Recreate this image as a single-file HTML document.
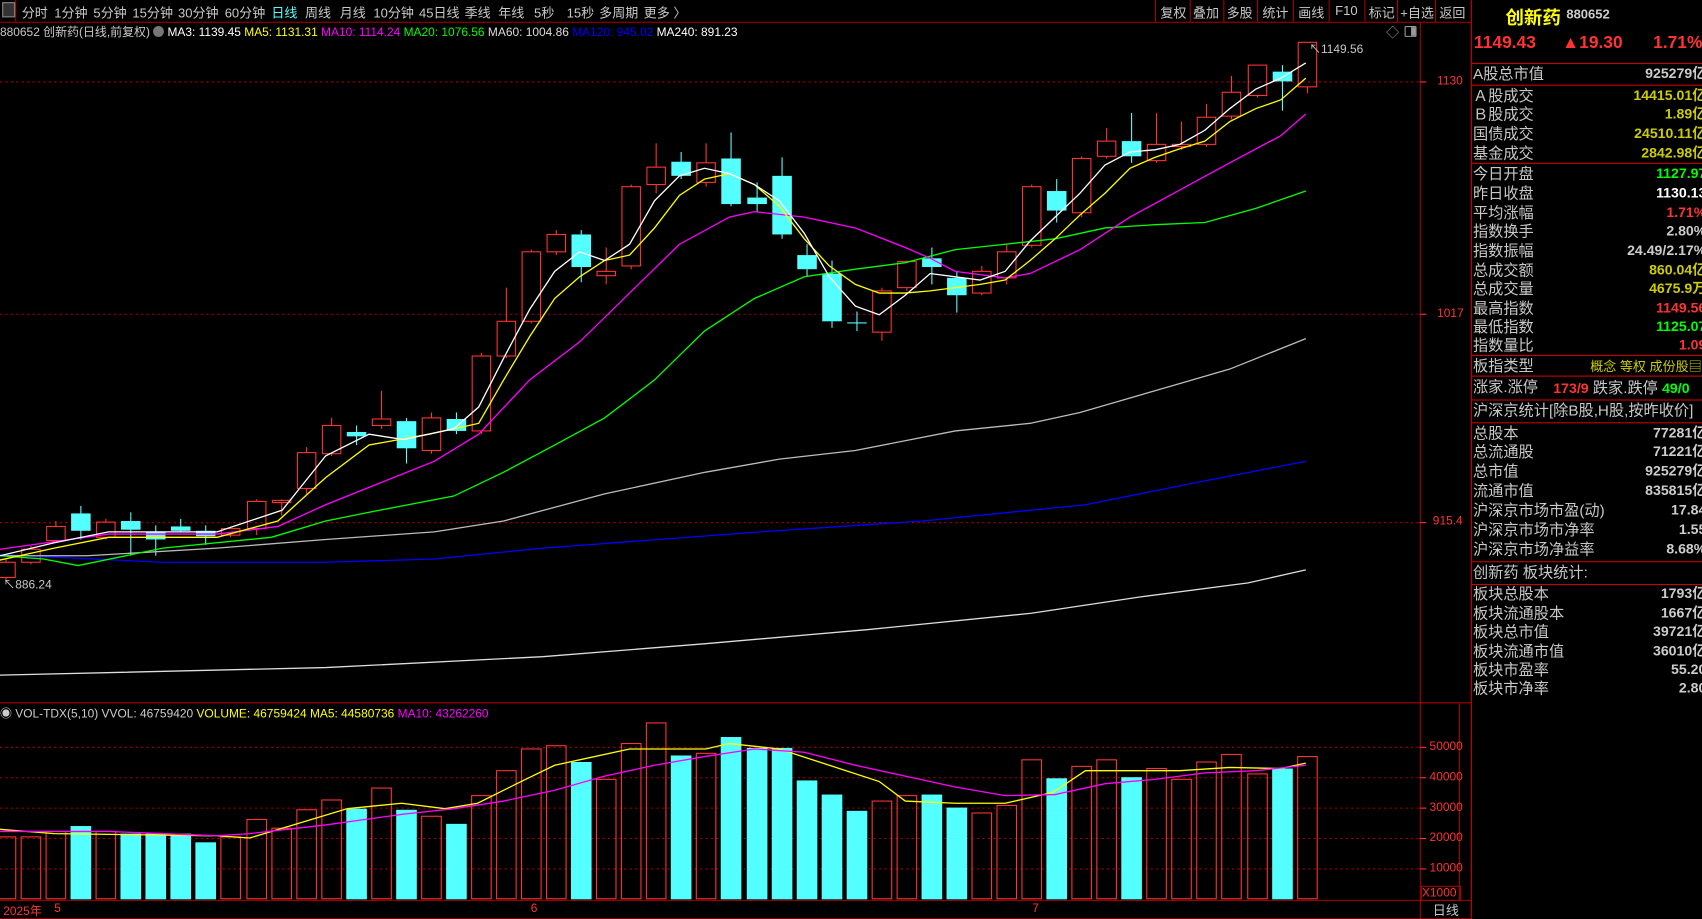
<!DOCTYPE html>
<html><head><meta charset="utf-8">
<style>
html,body{margin:0;padding:0;background:#000;overflow:hidden;width:1702px;height:919px}
#w{position:absolute;left:0;top:0;width:1568px;height:847px;transform:scale(1.08546);transform-origin:0 0;font-family:"Liberation Sans","Noto Sans CJK SC",sans-serif;color:#c8c8c8}
.t{position:absolute;white-space:nowrap}
.tb{font-size:12px;top:3px}
.rp{position:absolute;left:1355px;top:0;width:213px;height:847px;overflow:hidden}
.row{position:absolute;left:2px;width:250px;font-size:14px;height:18px;line-height:18px}
.row .v{position:absolute;right:35px;top:0;font-weight:bold;font-size:13px}
.hl{position:absolute;left:0;width:213px;height:1px;background:#c00}
</style></head><body><div id="w">
<svg id="s" width="1568" height="847" style="position:absolute;left:0;top:0"></svg>
<div class="t tb" style="left:2px;top:2px;width:10px;height:12px;border:1px solid #888;background:#333"></div>
<div class="t tb" style="left:20px">分时</div><div class="t tb" style="left:50px">1分钟</div><div class="t tb" style="left:86px">5分钟</div><div class="t tb" style="left:122px">15分钟</div><div class="t tb" style="left:164px">30分钟</div><div class="t tb" style="left:207px">60分钟</div><div class="t tb" style="left:250px;color:#5ff">日线</div><div class="t tb" style="left:281px">周线</div><div class="t tb" style="left:313px">月线</div><div class="t tb" style="left:344px">10分钟</div><div class="t tb" style="left:386px">45日线</div><div class="t tb" style="left:428px">季线</div><div class="t tb" style="left:459px">年线</div><div class="t tb" style="left:492px">5秒</div><div class="t tb" style="left:522px">15秒</div><div class="t tb" style="left:552px">多周期</div><div class="t tb" style="left:593px">更多 〉</div>
<div class="t tb" style="left:1069px">复权</div><div class="t tb" style="left:1099px">叠加</div><div class="t tb" style="left:1130px">多股</div><div class="t tb" style="left:1163px">统计</div><div class="t tb" style="left:1196px">画线</div><div class="t tb" style="left:1230px">F10</div><div class="t tb" style="left:1261px">标记</div><div class="t tb" style="left:1290px">+自选</div><div class="t tb" style="left:1326px">返回</div>
<div class="t" style="left:0;top:21px;font-size:11px">880652 创新药(日线,前复权) <span style="display:inline-block;width:10px;height:10px;border-radius:5px;background:#777;vertical-align:-1px"></span> <span style="color:#fff">MA3: 1139.45</span> <span style="color:#ff0">MA5: 1131.31</span> <span style="color:#f0f">MA10: 1114.24</span> <span style="color:#0f0">MA20: 1076.56</span> <span style="color:#ddd">MA60: 1004.86</span> <span style="color:#00f">MA120: 945.02</span> <span style="color:#fff">MA240: 891.23</span></div>
<div class="t" style="left:1277px;top:21px;font-size:12px;color:#999">◇</div>
<div class="t" style="left:1294px;top:24px;width:9px;height:8px;border:1px solid #999;border-radius:1px"><div style="position:absolute;right:0;top:0;width:4px;height:8px;background:#999"></div></div>
<div class="t" style="left:1206px;top:37px;font-size:11px">↖1149.56</div>
<div class="t" style="left:3px;top:530px;font-size:11px">↖886.24</div>
<div class="t" style="left:1324px;top:69px;font-size:11px;color:#f33">1130</div>
<div class="t" style="left:1324px;top:283px;font-size:11px;color:#f33">1017</div>
<div class="t" style="left:1320px;top:474px;font-size:11px;color:#f33">915.4</div>
<div class="t" style="left:0;top:649px;font-size:11px"><span style="color:#ccc">◉ VOL-TDX(5,10) VVOL: 46759420</span> <span style="color:#ff0">VOLUME: 46759424 MA5: 44580736</span> <span style="color:#f0f">MA10: 43262260</span></div>
<div class="t" style="left:1317px;top:682px;font-size:11px;color:#f33">50000</div>
<div class="t" style="left:1317px;top:710px;font-size:11px;color:#f33">40000</div>
<div class="t" style="left:1317px;top:738px;font-size:11px;color:#f33">30000</div>
<div class="t" style="left:1317px;top:766px;font-size:11px;color:#f33">20000</div>
<div class="t" style="left:1317px;top:794px;font-size:11px;color:#f33">10000</div>
<div class="t" style="left:1309px;top:816px;width:35px;height:12px;border:1px solid #a00;font-size:11px;line-height:12px;color:#f33">X1000</div>
<div class="t" style="left:3px;top:831px;font-size:11px;color:#f33">2025年</div>
<div class="t" style="left:50px;top:831px;font-size:11px;color:#f33">5</div>
<div class="t" style="left:489px;top:831px;font-size:11px;color:#f33">6</div>
<div class="t" style="left:951px;top:831px;font-size:11px;color:#f33">7</div>
<div class="t" style="left:1320px;top:830px;font-size:12px">日线</div>
<div class="rp">
<div class="t" style="left:32px;top:2px;font-size:17px;font-weight:bold;color:#ff0">创新药</div>
<div class="t" style="left:88px;top:6px;font-size:12px;font-weight:bold;color:#ccc">880652</div>
<div class="t" style="left:3px;top:31px;font-size:16px;font-weight:bold;color:#f33">1149.43</div>
<div class="t" style="left:84px;top:31px;font-size:16px;font-weight:bold;color:#f33">▲19.30</div>
<div class="t" style="left:168px;top:31px;font-size:16px;font-weight:bold;color:#f33">1.71%</div>
<div class="hl" style="top:58px"></div><div class="hl" style="top:78px"></div><div class="hl" style="top:150px"></div><div class="hl" style="top:327px"></div><div class="hl" style="top:346px"></div><div class="hl" style="top:368px"></div><div class="hl" style="top:389px"></div><div class="hl" style="top:517px"></div><div class="hl" style="top:538px"></div>
<div id="rows"></div>
</div>
</div>
<script>
var NS="http://www.w3.org/2000/svg",s=document.getElementById('s');
function el(n,a){var e=document.createElementNS(NS,n);for(var k in a)e.setAttribute(k,a[k]);s.appendChild(e);return e}
function ln(x1,y1,x2,y2,c,o){var a={x1:x1,y1:y1,x2:x2,y2:y2,stroke:c,'stroke-width':1};if(o)a['stroke-dasharray']=o;el('line',a)}
ln(0,20.5,1355,20.5,'#a00');ln(1308.5,20,1308.5,847,'#a00');ln(1355.5,0,1355.5,847,'#c00');
ln(0,647.5,1355,647.5,'#a00');ln(0,829.5,1355,829.5,'#a00');ln(0,846.5,1355,846.5,'#a00');
[1064,1096,1127,1158,1191,1224,1257,1287,1322].forEach(function(x){ln(x+.5,0,x+.5,20,'#a00')});
ln(14.5,0,14.5,20,'#a00');
[75,289,481].forEach(function(y){ln(0,y+.5,1308,y+.5,'#a00','2,3');ln(1308,y+.5,1314,y+.5,'#f33')});
[688,716,744,772,800].forEach(function(y){ln(0,y+.5,1308,y+.5,'#a00','2,3');ln(1308,y+.5,1314,y+.5,'#f33')});
ln(1344.5,648,1344.5,829,'#a00');
var C=[[518,532,515,535,'r'],[506,518,503,520,'r'],[485,498,480,500,'r'],[473,489,466,497,'c'],[481,495,478,497,'r'],[480,488,472,512,'c'],[490,497,484,512,'c'],[485,489,478,490,'c'],[489,494,484,502,'c'],[487,493,485,495,'r'],[462,487,460,493,'r'],[461,463,460,475,'r'],[417,450,412,455,'r'],[392,418,385,420,'r'],[398,402,392,410,'c'],[386,392,360,395,'r'],[388,413,385,427,'c'],[385,415,380,418,'r'],[386,397,380,400,'c'],[328,397,325,400,'r'],[296,328,265,330,'r'],[232,296,230,298,'r'],[216,232,212,235,'r'],[216,246,212,260,'c'],[250,254,228,262,'r'],[172,245,170,248,'r'],[154,170,132,178,'r'],[149,162,140,165,'c'],[150,168,132,172,'r'],[146,188,122,190,'c'],[182,188,168,195,'c'],[162,216,145,220,'c'],[235,248,225,255,'c'],[252,296,240,302,'c'],[297,298,287,305,'c'],[268,306,265,314,'r'],[241,265,240,268,'r'],[238,246,228,262,'c'],[256,272,250,288,'c'],[250,270,245,272,'r'],[232,256,225,262,'r'],[172,226,170,228,'r'],[176,194,165,205,'c'],[146,196,144,200,'r'],[130,144,118,146,'r'],[130,144,104,150,'c'],[133,148,104,150,'r'],[133,135,112,138,'r'],[108,133,96,135,'r'],[85,107,70,110,'r'],[60,88,60,90,'r'],[66,75,60,102,'c'],[39,80,39,86,'r']];
var V=[771,771,766,761,766,768,768,768,776,771,755,763,746,737,745,726,746,752,759,733,710,690,687,702,718,685,666,696,694,679,689,689,719,732,747,738,733,732,744,749,742,700,717,706,700,716,708,718,702,695,713,708,697];
var R='#ff3333',CY='#54ffff';
C.forEach(function(c,i){var x=Math.round(5+i*23.05)+.5,w=17;
 if(c[4]=='r'){ln(x,c[2],x,c[0],R);ln(x,c[1],x,c[3],R);el('rect',{x:x-w/2,y:c[0],width:w,height:Math.max(1,c[1]-c[0]),fill:'none',stroke:R})}
 else{ln(x,c[2],x,c[3],CY);el('rect',{x:x-w/2-.5,y:c[0],width:w+1,height:Math.max(1,c[1]-c[0]),fill:CY})}
 var v=V[i];if(c[4]=='r')el('rect',{x:x-9,y:v,width:18,height:828-v,fill:'none',stroke:R});else el('rect',{x:x-9.5,y:v,width:19,height:828.5-v,fill:CY});
});
function pl(p,c){el('polyline',{points:p.map(function(a){return a.join(',')}).join(' '),fill:'none',stroke:c,'stroke-width':1.2})}
pl([[0,622],[300,615],[500,605],[650,593],[800,580],[950,565],[1050,550],[1150,537],[1203,525]],'#ddd');
pl([[0,511],[150,518],[300,518],[400,515],[500,505],[700,490],[850,480],[1000,465],[1100,445],[1203,425]],'#0000ff');
pl([[0,512],[80,512],[200,505],[300,497],[400,490],[464,480],[557,455],[650,435],[718,423],[788,415],[880,397],[949,390],[995,380],[1064,360],[1133,340],[1203,312]],'#bbb');
pl([[0,512],[40,515],[72,521],[150,505],[250,495],[300,480],[350,470],[418,457],[464,435],[511,410],[557,385],[603,350],[649,305],[695,275],[741,255],[788,248],[834,242],[880,230],[926,225],[972,220],[1018,210],[1064,207],[1110,205],[1157,192],[1203,176]],'#00ff00');
pl([[0,506],[100,492],[200,492],[256,485],[300,465],[350,445],[400,425],[441,400],[488,350],[534,315],[580,270],[626,225],[672,200],[695,195],[741,200],[788,210],[834,228],[857,238],[880,250],[926,256],[949,252],[995,230],[1041,200],[1087,175],[1133,150],[1180,125],[1203,105]],'#ff00ff');
pl([[0,516],[50,505],[100,495],[200,495],[256,480],[300,440],[340,410],[395,400],[441,390],[464,350],[488,310],[511,275],[534,255],[557,240],[580,235],[603,210],[626,180],[649,165],[672,160],[695,170],[718,190],[741,220],[764,245],[788,262],[810,270],[834,270],[857,268],[880,265],[903,262],[926,258],[949,240],[972,220],[995,198],[1018,178],[1041,155],[1064,145],[1087,137],[1110,130],[1133,112],[1157,100],[1180,92],[1203,72]],'#ffff00');
pl([[0,512],[50,500],[100,490],[200,490],[260,470],[300,420],[340,400],[372,405],[418,395],[441,375],[464,330],[488,285],[511,250],[534,232],[557,240],[580,225],[603,185],[626,162],[649,155],[672,160],[695,170],[718,185],[741,215],[764,255],[788,282],[810,290],[834,272],[857,252],[880,255],[903,258],[926,250],[949,222],[972,200],[995,178],[1018,152],[1041,140],[1064,138],[1087,133],[1110,120],[1133,100],[1157,82],[1180,72],[1203,58]],'#ffffff');
pl([[0,764],[50,768],[200,770],[230,772],[270,760],[320,745],[370,740],[410,745],[440,740],[480,720],[511,705],[534,700],[580,690],[650,690],[672,685],[718,690],[764,705],[810,720],[834,738],[880,740],[926,740],[970,730],[1000,710],[1041,710],[1087,710],[1133,707],[1180,708],[1203,703]],'#ffff00');
pl([[0,766],[100,766],[200,770],[230,768],[300,760],[372,750],[418,745],[464,738],[511,728],[557,715],[603,705],[649,697],[695,690],[741,693],[788,705],[834,715],[880,725],[926,733],[972,732],[1018,722],[1064,718],[1110,712],[1157,710],[1203,705]],'#ff00ff');
var rows=[[68,'A股总市值','925279亿','#ccc'],[88,'Ａ股成交','14415.01亿','#cc0'],[105,'Ｂ股成交','1.89亿','#cc0'],[123,'国债成交','24510.11亿','#cc0'],[141,'基金成交','2842.98亿','#cc0'],[160,'今日开盘','1127.97','#0f0'],[178,'昨日收盘','1130.13','#fff'],[196,'平均涨幅','1.71%','#f33'],[213,'指数换手','2.80%','#ccc'],[231,'指数振幅','24.49/2.17%','#ccc'],[249,'总成交额','860.04亿','#cc0'],[266,'总成交量','4675.9万','#cc0'],[284,'最高指数','1149.56','#f33'],[301,'最低指数','1125.07','#0f0'],[318,'指数量比','1.09','#f33'],[337,'板指类型','',''],[356,'涨家.涨停','',''],[378,'沪深京统计[除B股,H股,按昨收价]','',''],[399,'总股本','77281亿','#ccc'],[416,'总流通股','71221亿','#ccc'],[434,'总市值','925279亿','#ccc'],[452,'流通市值','835815亿','#ccc'],[470,'沪深京市场市盈(动)','17.84','#ccc'],[488,'沪深京市场市净率','1.55','#ccc'],[506,'沪深京市场净益率','8.68%','#ccc'],[527,'创新药 板块统计:','',''],[547,'板块总股本','1793亿','#ccc'],[565,'板块流通股本','1667亿','#ccc'],[582,'板块总市值','39721亿','#ccc'],[600,'板块流通市值','36010亿','#ccc'],[617,'板块市盈率','55.20','#ccc'],[634,'板块市净率','2.80','#ccc']];
var h='';rows.forEach(function(r){h+='<div class="row" style="top:'+(r[0]-9)+'px">'+r[1]+(r[2]?'<span class="v" style="color:'+r[3]+'">'+r[2]+'</span>':'')+'</div>'});
h+='<div class="t" style="left:110px;top:329px;font-size:12px;color:#cc0">概念 等权 成份股▤</div>';
h+='<div class="t" style="left:76px;top:347px;font-size:14px"><b style="color:#f33;font-size:13px">173/9</b> 跌家.跌停 <b style="color:#0f0;font-size:13px">49/0</b></div>';
document.getElementById('rows').innerHTML=h;
</script>
</body></html>
